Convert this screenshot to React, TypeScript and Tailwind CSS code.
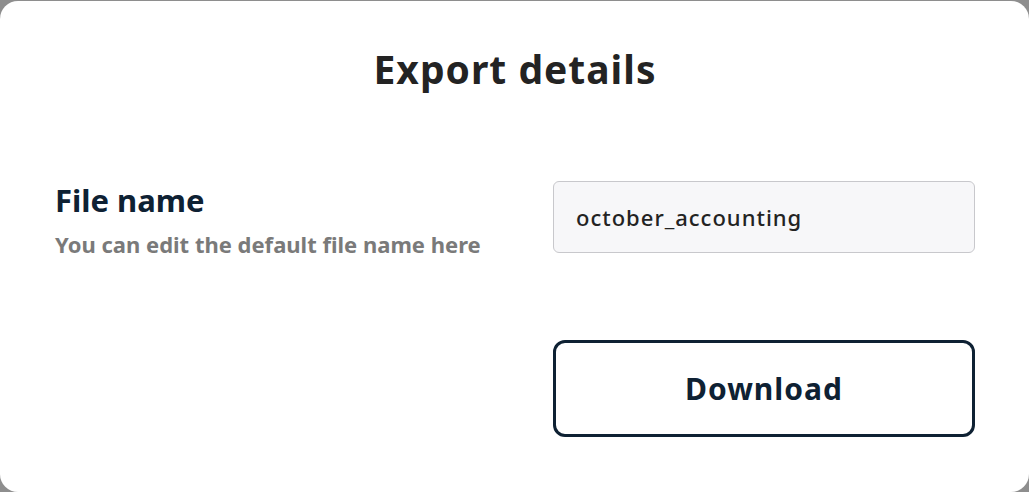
const App = () => {
  return (
    <div className="h-[492px] w-[1029px] bg-[#8e8e8e] pt-px" style={{ fontFamily: '"Noto Sans", "DejaVu Sans", sans-serif' }}>
      <div className="h-[491px] rounded-[18px] bg-white pl-[55px] pr-[54px]">
        {/* heading */}
        <h1 className="pt-[42px] text-center text-[39px] font-bold leading-[52px] tracking-[1px] text-[#232323]">
          Export details
        </h1>

        {/* file name row */}
        <div className="mt-[86px] flex items-start justify-between">
          <div className="pt-px">
            <h2 className="text-[31px] font-bold leading-[36px] text-[#0e2133]">File name</h2>
            <p className="mt-[12px] text-[22px] font-bold leading-[28px] text-[#7a7a7a]">
              You can edit the default file name here
            </p>
          </div>
          <input
            className="h-[72px] w-[422px] rounded-[6px] border border-[#c8c8cc] bg-[#f7f7f9] px-[22px] text-[22px] font-medium tracking-[1px] text-[#232323] outline-none"
            defaultValue="october_accounting"
          />
        </div>

        {/* action */}
        <div className="mt-[82px] flex justify-end">
          <button className="h-[97px] w-[422px] rounded-[12px] border-[3px] border-[#0e2133] bg-white text-[30px] font-bold tracking-[1px] text-[#0e2133]">
            Download
          </button>
        </div>
      </div>
    </div>
  );
};

export default App;
